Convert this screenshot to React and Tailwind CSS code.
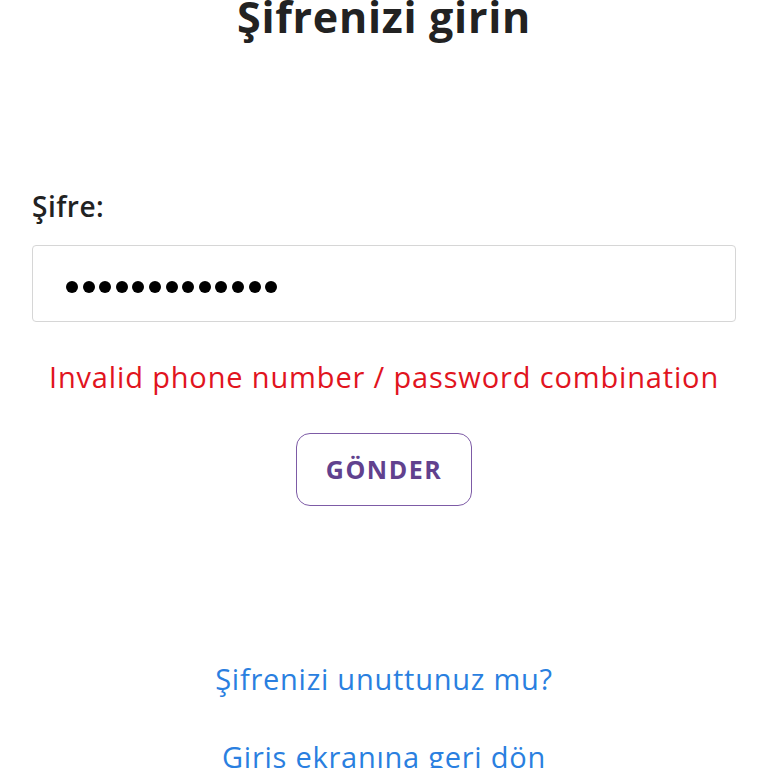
import { useState } from 'react'

export default function App() {
  const [count] = useState(13)
  const dots = Array.from({ length: count })

  return (
    <div className="min-h-screen bg-white px-8 flex flex-col overflow-hidden" style={{ fontFamily: '"Open Sans", Lato, sans-serif' }}>
      <h1 className="text-center text-[43px] leading-none font-bold tracking-[0.7px] text-[#222] -mt-[5px]">Şifrenizi girin</h1>

      <label className="mt-[154px] text-[28px] leading-none font-semibold tracking-[0.5px] text-[#222]">Şifre:</label>

      <div className="mt-[25px] h-[77px] border border-[#d6d6d6] rounded-[4px] flex items-center pl-[33px] pt-[7px] gap-[4.6px]">
        {dots.map((_, i) => (
          <span key={i} className="w-3 h-3 rounded-full bg-black" />
        ))}
      </div>

      <p className="mt-[40px] text-center text-[29px] leading-none tracking-[0.85px] text-[#e1141e]">Invalid phone number / password combination</p>

      <button className="self-center mt-[42px] w-[176px] h-[73px] border border-[#7d5ba6] rounded-[14px] text-[25px] font-bold tracking-[1.5px] text-[#61418e]">
        GÖNDER
      </button>

      <div className="mt-[158px] flex flex-col items-center gap-[49px]">
        <a href="#" className="text-[29px] leading-none tracking-[0.75px] text-[#2a7fe0]">Şifrenizi unuttunuz mu?</a>
        <a href="#" className="text-[29px] leading-none tracking-[0.75px] text-[#2a7fe0]">Giriş ekranına geri dön</a>
      </div>
    </div>
  )
}
